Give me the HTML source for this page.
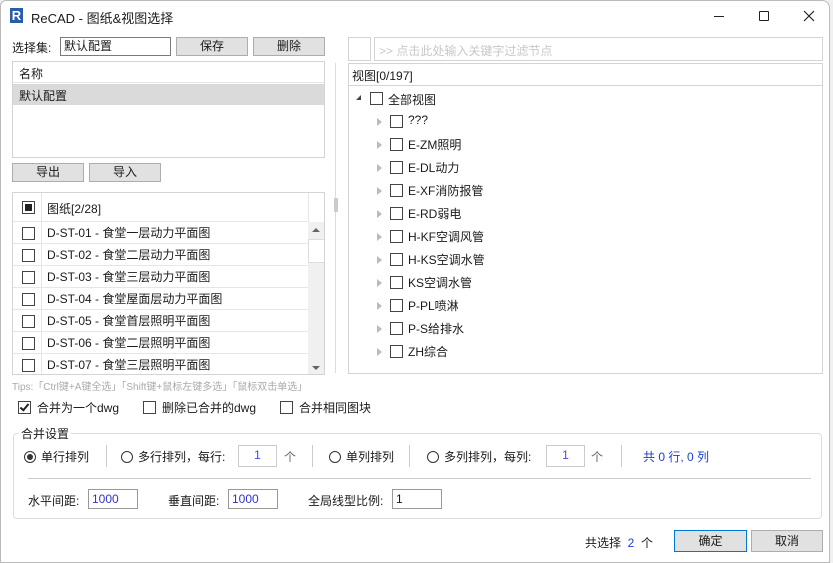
<!DOCTYPE html>
<html><head><meta charset="utf-8"><style>
*{box-sizing:border-box;margin:0;padding:0}
body{width:833px;height:563px;background:#f0f0f0;font-family:"Liberation Sans","Noto Sans CJK SC",sans-serif;font-size:12px;color:#1a1a1a;position:relative;overflow:hidden}
.win{position:absolute;left:0;top:0;width:830px;height:563px;background:#fff;border:1px solid #bbb;border-radius:6px 8px 0 0}
.a{position:absolute}
.btn{position:absolute;background:#e1e1e1;border:1px solid #adadad;text-align:center;line-height:16px;font-size:12px}
.box{position:absolute;border:1px solid #d4d4d4;background:#fff}
.inp{position:absolute;border:1px solid #7a7a7a;background:#fff;padding-left:3px;line-height:16px}
.cb{position:absolute;width:13px;height:13px;border:1px solid #444;background:#fff}
.row{position:absolute;left:0;width:295px;height:22px;border-bottom:1px solid #e6e6e6}
.row .cb{left:9px;top:5px}
.row span{position:absolute;left:34px;top:2px}
.vl{position:absolute;top:0;left:28px;width:1px;height:100%;background:#e6e6e6}
.tri{position:absolute;width:0;height:0;border-top:4px solid transparent;border-bottom:4px solid transparent;border-left:5px solid #bbb}
.rad{position:absolute;width:12px;height:12px;border:1px solid #333;border-radius:50%;background:#fff}
.sep{position:absolute;width:1px;height:22px;background:#ccc}
.num{position:absolute;border:1px solid #ccc;background:#fff;color:#44f;text-align:center;line-height:18px;height:22px}
.blue{color:#1a3fd0}
</style></head><body>
<div class="win">
<div class="a" style="left:9px;top:7px;width:13px;height:15px;background:#2a5ca8;color:#fff;font-weight:bold;font-size:13px;line-height:15px;text-align:center">R</div>
<div class="a" style="left:30px;top:7px;font-size:13px">ReCAD - 图纸&amp;视图选择</div>
<div class="a" style="left:713px;top:15px;width:10px;height:1px;background:#222"></div>
<div class="a" style="left:758px;top:10px;width:10px;height:10px;border:1px solid #222;border-radius:1px"></div>
<svg class="a" style="left:802px;top:9px" width="12" height="12"><path d="M1 1L11 11M11 1L1 11" stroke="#222" stroke-width="1.2"/></svg>

<div class="a" style="left:11px;top:38px">选择集:</div>
<div class="inp" style="left:59px;top:36px;width:111px;height:19px">默认配置</div>
<div class="btn" style="left:175px;top:36px;width:72px;height:19px">保存</div>
<div class="btn" style="left:252px;top:36px;width:72px;height:19px">删除</div>

<div class="box" style="left:11px;top:60px;width:313px;height:97px">
 <div class="a" style="left:0;top:0;width:311px;height:21px;border-bottom:1px solid #e6e6e6;padding:3px 6px">名称</div>
 <div class="a" style="left:0;top:22px;width:311px;height:21px;background:#dadada;padding:3px 6px">默认配置</div>
</div>
<div class="btn" style="left:11px;top:162px;width:72px;height:19px">导出</div>
<div class="btn" style="left:88px;top:162px;width:72px;height:19px">导入</div>

<div class="box" style="left:11px;top:191px;width:313px;height:183px;overflow:hidden">
 <div class="row" style="top:0;height:29px"><div class="cb" style="top:8px"><div style="margin:2px;width:7px;height:7px;background:#222"></div></div><span style="top:7px">图纸[2/28]</span><div class="vl"></div></div>
 <div class="row" style="top:29px"><div class="cb"></div><span>D-ST-01 - 食堂一层动力平面图</span><div class="vl"></div></div>
 <div class="row" style="top:51px"><div class="cb"></div><span>D-ST-02 - 食堂二层动力平面图</span><div class="vl"></div></div>
 <div class="row" style="top:73px"><div class="cb"></div><span>D-ST-03 - 食堂三层动力平面图</span><div class="vl"></div></div>
 <div class="row" style="top:95px"><div class="cb"></div><span>D-ST-04 - 食堂屋面层动力平面图</span><div class="vl"></div></div>
 <div class="row" style="top:117px"><div class="cb"></div><span>D-ST-05 - 食堂首层照明平面图</span><div class="vl"></div></div>
 <div class="row" style="top:139px"><div class="cb"></div><span>D-ST-06 - 食堂二层照明平面图</span><div class="vl"></div></div>
 <div class="row" style="top:161px"><div class="cb"></div><span>D-ST-07 - 食堂三层照明平面图</span><div class="vl"></div></div>
 <div class="a" style="left:295px;top:0;width:1px;height:29px;background:#e6e6e6"></div>
 <div class="a" style="left:295px;top:29px;width:17px;height:154px;background:#f0f0f0">
  <div class="a" style="left:4px;top:6px;border-left:4px solid transparent;border-right:4px solid transparent;border-bottom:4px solid #666"></div>
  <div class="a" style="left:0;top:17px;width:17px;height:24px;background:#fff;border:1px solid #ddd"></div>
  <div class="a" style="left:4px;top:144px;border-left:4px solid transparent;border-right:4px solid transparent;border-top:4px solid #666"></div>
 </div>
</div>
<div class="a" style="left:11px;top:377px;font-size:10px;color:#aaa">Tips:「Ctrl键+A键全选」「Shift键+鼠标左键多选」「鼠标双击单选」</div>

<div class="a" style="left:334px;top:62px;width:1px;height:310px;background:#ddd"></div>
<div class="a" style="left:333px;top:197px;width:4px;height:14px;background:#ccc"></div>

<div class="box" style="left:347px;top:36px;width:23px;height:24px"></div>
<div class="box" style="left:373px;top:36px;width:449px;height:24px;padding:4px 4px;color:#c8c8c8">&gt;&gt; 点击此处输入关键字过滤节点</div>
<div class="box" style="left:347px;top:62px;width:475px;height:311px">
 <div class="a" style="left:0;top:0;width:473px;height:22px;border-bottom:1px solid #d4d4d4;padding:3px 3px">视图[0/197]</div>
 <div class="a" style="left:7px;top:31px;border-left:5px solid transparent;border-bottom:5px solid #444"></div>
 <div class="cb" style="left:21px;top:28px"></div><div class="a" style="left:39px;top:27px">全部视图</div>
 <div id="tree"></div>
</div>

<div class="cb" style="left:17px;top:400px"><div style="position:absolute;left:3px;top:0px;width:5px;height:9px;border:solid #222;border-width:0 2px 2px 0;transform:rotate(40deg)"></div></div>
<div class="a" style="left:36px;top:398px">合并为一个dwg</div>
<div class="cb" style="left:142px;top:400px"></div><div class="a" style="left:161px;top:398px">删除已合并的dwg</div>
<div class="cb" style="left:279px;top:400px"></div><div class="a" style="left:298px;top:398px">合并相同图块</div>

<div class="a" style="left:12px;top:432px;width:809px;height:86px;border:1px solid #dcdcdc;border-radius:4px"></div>
<div class="a" style="left:18px;top:424px;background:#fff;padding:0 2px">合并设置</div>
<div class="rad" style="left:23px;top:450px"><div style="margin:2px;width:6px;height:6px;border-radius:50%;background:#333"></div></div>
<div class="a" style="left:40px;top:447px">单行排列</div>
<div class="sep" style="left:105px;top:444px"></div>
<div class="rad" style="left:120px;top:450px"></div><div class="a" style="left:137px;top:447px">多行排列，每行:</div>
<div class="num" style="left:237px;top:444px;width:39px">1</div><div class="a" style="left:283px;top:447px;color:#666">个</div>
<div class="sep" style="left:311px;top:444px"></div>
<div class="rad" style="left:328px;top:450px"></div><div class="a" style="left:345px;top:447px">单列排列</div>
<div class="sep" style="left:408px;top:444px"></div>
<div class="rad" style="left:426px;top:450px"></div><div class="a" style="left:443px;top:447px">多列排列，每列:</div>
<div class="num" style="left:545px;top:444px;width:39px">1</div><div class="a" style="left:590px;top:447px;color:#666">个</div>
<div class="sep" style="left:620px;top:444px"></div>
<div class="a blue" style="left:642px;top:447px">共 0 行, 0 列</div>
<div class="a" style="left:27px;top:477px;width:783px;height:1px;background:#ccc"></div>
<div class="a" style="left:27px;top:491px">水平间距:</div><div class="inp" style="left:87px;top:488px;width:50px;height:20px;border-color:#999;color:#33c;line-height:18px">1000</div>
<div class="a" style="left:167px;top:491px">垂直间距:</div><div class="inp" style="left:227px;top:488px;width:50px;height:20px;border-color:#999;color:#33c;line-height:18px">1000</div>
<div class="a" style="left:307px;top:491px">全局线型比例:</div><div class="inp" style="left:391px;top:488px;width:50px;height:20px;border-color:#999;line-height:18px">1</div>

<div class="a" style="left:584px;top:533px">共选择 <span class="blue">&nbsp;2&nbsp;</span> 个</div>
<div class="btn" style="left:673px;top:529px;width:73px;height:22px;line-height:20px;border-color:#0078d4">确定</div>
<div class="btn" style="left:750px;top:529px;width:72px;height:22px;line-height:20px">取消</div>
</div>
<script>
var t=["???","E-ZM照明","E-DL动力","E-XF消防报管","E-RD弱电","H-KF空调风管","H-KS空调水管","KS空调水管","P-PL喷淋","P-S给排水","ZH综合"],h="";
t.forEach(function(s,i){var y=49+i*23;h+='<div class="tri" style="left:28px;top:'+(y+5)+'px"></div><div class="cb" style="left:41px;top:'+(y+2)+'px"></div><div class="a" style="left:59px;top:'+y+'px">'+s+'</div>';});
document.getElementById("tree").innerHTML=h;
</script>
</body></html>
